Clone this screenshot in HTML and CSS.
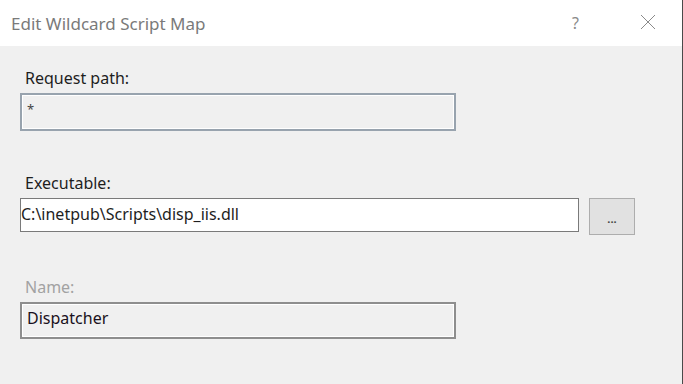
FILE: index.html
```html
<!DOCTYPE html>
<html lang="en">
<head>
  <meta charset="UTF-8">
  <title>Edit Wildcard Script Map</title>
  <link rel="stylesheet" href="styles.css">
</head>
<body>

<div class="dialog">
  <div class="titlebar">
    <span class="title">Edit Wildcard Script Map</span>
    <span class="help">?</span>
    <span class="close">
      <svg width="16" height="16" viewBox="0 0 16 16">
        <path d="M1 1 L15 15 M15 1 L1 15" stroke="#8a8a8a" stroke-width="1" fill="none"/>
      </svg>
    </span>
  </div>

  <div class="content">
    <div class="field first">
      <label>Request path:</label>
      <div class="box readonly tall"><span class="star">*</span></div>
    </div>

    <div class="field">
      <label>Executable:</label>
      <div class="row">
        <div class="box edit">C:\inetpub\Scripts\disp_iis.dll</div>
        <button class="browse">...</button>
      </div>
    </div>

    <div class="field">
      <label class="disabled">Name:</label>
      <div class="box readonly grey">Dispatcher</div>
    </div>
  </div>
</div>

</body>
</html>
```

FILE: styles.css
```css
* {
  margin: 0;
  padding: 0;
  box-sizing: border-box;
}

html, body {
  height: 100%;
  font-family: 'Noto Sans', 'Open Sans', sans-serif;
  background: #f0f0f0;
  overflow: hidden;
}

.dialog {
  height: 100%;
  border-right: 1px solid #4a4a4a;
}

.titlebar {
  height: 46px;
  background: #ffffff;
  display: flex;
  align-items: center;
  padding-left: 11px;
}

.title {
  flex: 1;
  font-size: 17px;
  color: #7a7a7a;
}

.help {
  font-size: 16px;
  color: #8a8a8a;
  width: 10px;
  margin-right: 58px;
}

.close {
  display: flex;
  margin-right: 26px;
  padding-bottom: 2px;
}

.content {
  padding: 21px 0 0 20px;
}

.field {
  margin-top: 41px;
}

.field.first {
  margin-top: 0;
}

label {
  display: block;
  font-size: 16px;
  line-height: 22px;
  color: #1e1e1e;
  padding-left: 5px;
  margin-bottom: 4px;
}

label.disabled {
  color: #a2a2a2;
}

.box {
  width: 436px;
  font-size: 16px;
  color: #1e1e1e;
  padding: 3px 5px;
  line-height: 22px;
}

.readonly {
  height: 38px;
  border: 2px solid #98a3ae;
  box-shadow: inset 0 0 0 1px #ffffff;
  background: #f0f0f0;
}

.readonly.grey {
  height: 37px;
  border-color: #8e8e8e;
  color: #1a1020;
}

.tall {
  line-height: 14px;
  padding-top: 6px;
}

.star {
  font-size: 13px;
  color: #444;
}

.row {
  display: flex;
  align-items: flex-start;
}

.edit {
  width: 559px;
  height: 34px;
  border: 1px solid #7a7a7a;
  background: #ffffff;
  padding: 4px 0;
}

.browse {
  width: 46px;
  height: 37px;
  margin-left: 10px;
  background: #e1e1e1;
  border: 1px solid #adadad;
  font-family: 'Noto Sans', sans-serif;
  font-size: 11px;
  font-weight: bold;
  color: #444;
  padding-top: 4px;
}
```
